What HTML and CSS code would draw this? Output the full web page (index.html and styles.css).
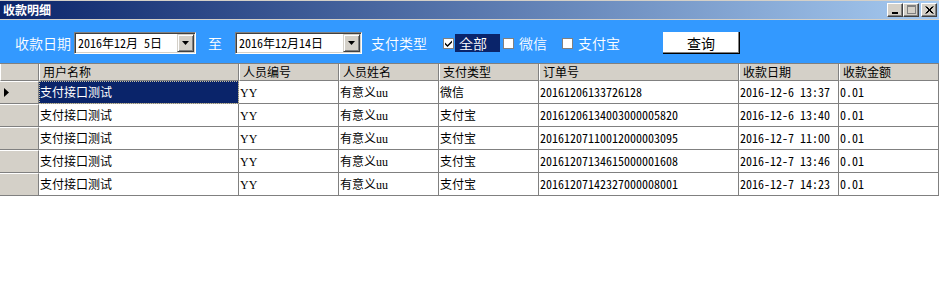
FILE: index.html
```html
<!DOCTYPE html>
<html lang="zh-CN">

<head>
    <meta charset="UTF-8">
    <title>收款明细</title>
    <link rel="stylesheet" href="styles.css">
</head>

<body>
    <div class="window">
        <!-- Title bar -->
        <div class="titlebar">
            <span class="title">收款明细</span>
            <div class="win-buttons">
                <span class="win-btn">
                    <svg width="14" height="12" viewBox="0 0 14 12"><rect x="4" y="8" width="6" height="2" fill="#000"/></svg>
                </span>
                <span class="win-btn">
                    <svg width="14" height="12" viewBox="0 0 14 12"><rect x="3.5" y="1.5" width="8" height="8" fill="none" stroke="#808080"/><rect x="3" y="1" width="9" height="2" fill="#808080"/></svg>
                </span>
                <span class="win-btn close">
                    <svg width="14" height="12" viewBox="0 0 14 12"><path d="M3.5 2.5 L10.5 9.5 M4.5 2.5 L11.5 9.5 M10.5 2.5 L3.5 9.5 M11.5 2.5 L4.5 9.5" stroke="#000" stroke-width="1"/></svg>
                </span>
            </div>
        </div>

        <!-- Filter toolbar -->
        <div class="toolbar">
            <span class="label first">收款日期</span>
            <div class="picker picker-from">
                <span class="picker-text">2016年12月 5日</span>
                <span class="drop">
                    <svg width="7" height="4" viewBox="0 0 7 4"><path d="M0 0 H7 L3.5 4 Z" fill="#000"/></svg>
                </span>
            </div>
            <span class="label to">至</span>
            <div class="picker picker-to">
                <span class="picker-text">2016年12月14日</span>
                <span class="drop">
                    <svg width="7" height="4" viewBox="0 0 7 4"><path d="M0 0 H7 L3.5 4 Z" fill="#000"/></svg>
                </span>
            </div>
            <span class="label type">支付类型</span>

            <span class="check checked">
                <svg width="9" height="9" viewBox="0 0 9 9"><path d="M1 3.5 L3.5 6 L8 1.5 V3.5 L3.5 8 L1 5.5 Z" fill="#000"/></svg>
            </span>
            <span class="label focus">全部</span>
            <span class="check wx"></span>
            <span class="label opt">微信</span>
            <span class="check zfb"></span>
            <span class="label opt">支付宝</span>

            <button class="query" type="button">查询</button>
        </div>

        <!-- Data grid -->
        <div class="grid">
            <div class="row head">
                <span class="rh"></span>
                <span class="hc">用户名称</span>
                <span class="hc">人员编号</span>
                <span class="hc">人员姓名</span>
                <span class="hc">支付类型</span>
                <span class="hc">订单号</span>
                <span class="hc">收款日期</span>
                <span class="hc">收款金额</span>
            </div>
            <div class="row">
                <span class="rh current">
                    <svg width="6" height="9" viewBox="0 0 6 9"><path d="M0 0 L5 4.5 L0 9 Z" fill="#000"/></svg>
                </span>
                <span class="c selected">支付接口测试</span>
                <span class="c"><span class="lat">YY</span></span>
                <span class="c">有意义<span class="lat">uu</span></span>
                <span class="c">微信</span>
                <span class="c">20161206133726128</span>
                <span class="c">2016-12-6 13:37</span>
                <span class="c">0.01</span>
            </div>
            <div class="row">
                <span class="rh"></span>
                <span class="c">支付接口测试</span>
                <span class="c"><span class="lat">YY</span></span>
                <span class="c">有意义<span class="lat">uu</span></span>
                <span class="c">支付宝</span>
                <span class="c">20161206134003000005820</span>
                <span class="c">2016-12-6 13:40</span>
                <span class="c">0.01</span>
            </div>
            <div class="row">
                <span class="rh"></span>
                <span class="c">支付接口测试</span>
                <span class="c"><span class="lat">YY</span></span>
                <span class="c">有意义<span class="lat">uu</span></span>
                <span class="c">支付宝</span>
                <span class="c">20161207110012000003095</span>
                <span class="c">2016-12-7 11:00</span>
                <span class="c">0.01</span>
            </div>
            <div class="row">
                <span class="rh"></span>
                <span class="c">支付接口测试</span>
                <span class="c"><span class="lat">YY</span></span>
                <span class="c">有意义<span class="lat">uu</span></span>
                <span class="c">支付宝</span>
                <span class="c">20161207134615000001608</span>
                <span class="c">2016-12-7 13:46</span>
                <span class="c">0.01</span>
            </div>
            <div class="row">
                <span class="rh"></span>
                <span class="c">支付接口测试</span>
                <span class="c"><span class="lat">YY</span></span>
                <span class="c">有意义<span class="lat">uu</span></span>
                <span class="c">支付宝</span>
                <span class="c">20161207142327000008001</span>
                <span class="c">2016-12-7 14:23</span>
                <span class="c">0.01</span>
            </div>
        </div>
    </div>
</body>

</html>
```

FILE: styles.css
```css
/* Reset */
* {
    margin: 0;
    padding: 0;
    box-sizing: border-box;
}

body {
    background: #fff;
    font-family: "Noto Sans Mono CJK SC", "Noto Sans CJK SC", sans-serif;
    font-size: 12px;
    font-weight: 350;
    color: #000;
}

.window {
    width: 939px;
}

/* Title bar */
.titlebar {
    height: 20px;
    border-top: 1px solid #d4d0c8;
    border-bottom: 1px solid #d4d0c8;
    background: linear-gradient(to right, #0a246a, #a6caf0);
    display: flex;
    align-items: center;
    justify-content: space-between;
    padding-left: 3px;
    padding-right: 2px;
}

.title {
    color: #fff;
    font-family: "Noto Sans CJK SC", sans-serif;
    font-weight: bold;
    font-size: 12px;
    line-height: 18px;
}

.win-buttons {
    display: flex;
}

.win-btn {
    width: 16px;
    height: 14px;
    background: #d4d0c8;
    border-top: 1px solid #fff;
    border-left: 1px solid #fff;
    border-right: 1px solid #404040;
    border-bottom: 1px solid #404040;
    box-shadow: inset -1px -1px 0 #808080;
    display: flex;
    align-items: center;
    justify-content: center;
}

.win-btn.close {
    margin-left: 2px;
}

/* Toolbar */
.toolbar {
    height: 43px;
    background: #3399ff;
    display: flex;
    align-items: center;
    padding-top: 3px;
    padding-left: 15px;
}

.label {
    color: #fff;
    font-family: "Noto Sans CJK SC", sans-serif;
    font-size: 14px;
    line-height: 18px;
    white-space: nowrap;
}

.label.to {
    margin-left: 12px;
}

.label.type {
    margin-left: 9px;
}

.label.focus {
    background: #0a246a;
    width: 45px;
    height: 18px;
    padding-left: 4px;
}

.label.opt {
    margin-left: 5px;
}

.picker {
    height: 22px;
    background: #fff;
    border-top: 1px solid #808080;
    border-left: 1px solid #808080;
    border-right: 1px solid #fff;
    border-bottom: 1px solid #fff;
    box-shadow: inset 1px 1px 0 #404040, inset -1px -1px 0 #d4d0c8;
    display: flex;
    align-items: center;
    justify-content: space-between;
    padding: 1px 1px 1px 3px;
}

.picker-from {
    width: 122px;
    margin-left: 3px;
}

.picker-to {
    width: 127px;
    margin-left: 13px;
}

.picker-text {
    font-size: 12px;
    line-height: 16px;
    white-space: pre;
}

.drop {
    width: 17px;
    height: 18px;
    background: #d4d0c8;
    border-top: 1px solid #d4d0c8;
    border-left: 1px solid #d4d0c8;
    border-right: 1px solid #404040;
    border-bottom: 1px solid #404040;
    box-shadow: inset 1px 1px 0 #fff, inset -1px -1px 0 #808080;
    display: flex;
    align-items: center;
    justify-content: center;
}

.check {
    width: 11px;
    height: 11px;
    background: #fff;
    border: 1px solid #808080;
    display: flex;
    align-items: center;
    justify-content: center;
}

.check.checked {
    margin-left: 16px;
    margin-right: 1px;
}

.check.wx {
    margin-left: 3px;
}

.check.zfb {
    margin-left: 15px;
}

.query {
    margin-left: 43px;
    width: 77px;
    height: 22px;
    background: #fff;
    border: none;
    border-right: 1px solid #000;
    border-bottom: 1px solid #000;
    box-shadow: inset -1px -1px 0 #808080;
    font-family: "Noto Sans CJK SC", sans-serif;
    font-size: 14px;
    color: #000;
}

/* Grid */
.grid {
    border-top: 1px solid #808080;
}

.row {
    display: grid;
    grid-template-columns: 39px 200px 100px 100px 100px 200px 100px 1fr;
    height: 23px;
}

.row.head {
    height: 17px;
    background: #d4d0c8;
}

.rh {
    background: #d4d0c8;
    border-top: 1px solid #fff;
    border-bottom: 1px solid #808080;
    border-right: 1px solid #808080;
    display: flex;
    align-items: center;
    padding-left: 4px;
}

.head .rh {
    border-top: none;
    border-left: 1px solid #fff;
}

.hc {
    border-left: 1px solid #fff;
    border-right: 1px solid #808080;
    border-bottom: 1px solid #808080;
    padding-left: 3px;
    line-height: 16px;
    white-space: nowrap;
    overflow: hidden;
}

.c {
    background: #fff;
    border-right: 1px solid #808080;
    border-bottom: 1px solid #808080;
    padding-left: 1px;
    line-height: 22px;
    white-space: nowrap;
    overflow: hidden;
}

.c.selected {
    background: #0a246a;
    color: #fff;
    outline: 1px dotted #c8c0a0;
    outline-offset: -1px;
}

.lat {
    font-family: "Liberation Serif", serif;
    font-size: 12px;
}
```
